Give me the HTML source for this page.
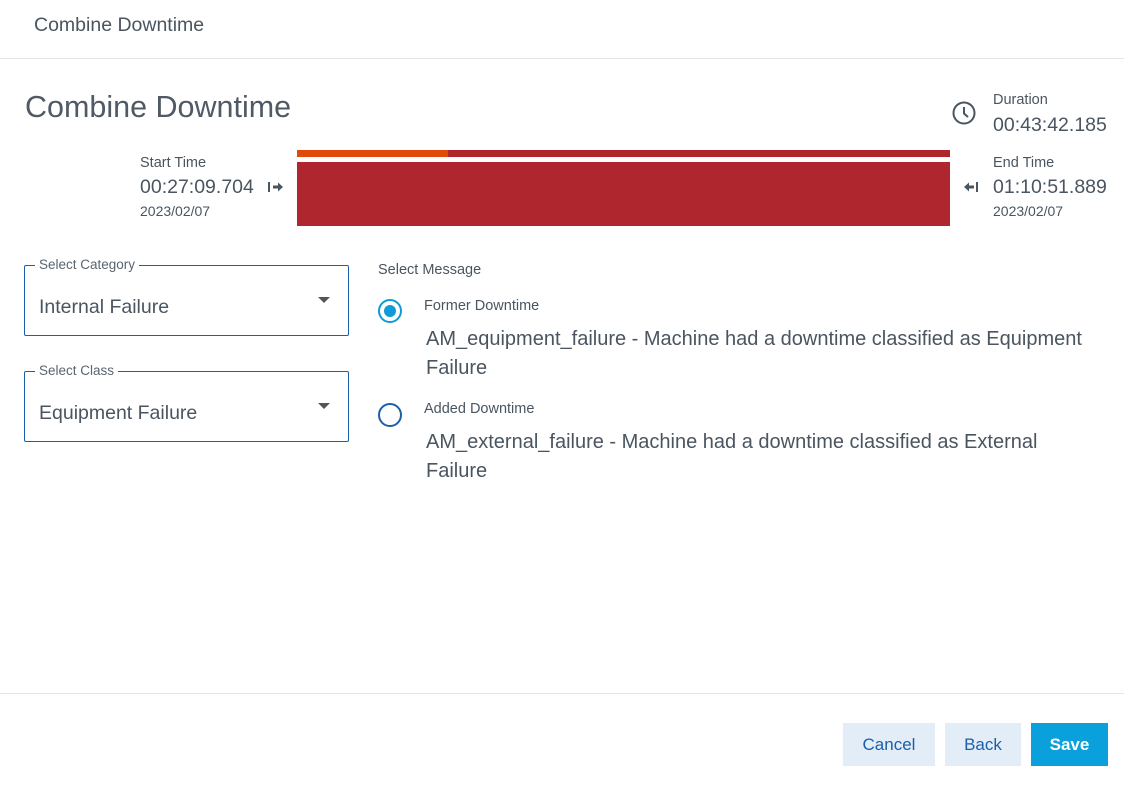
<!DOCTYPE html>
<html><head><style>
*{margin:0;padding:0;box-sizing:border-box}
body{width:1124px;height:790px;background:#fff;font-family:"Liberation Sans",sans-serif;color:#4a5560;position:relative;overflow:hidden}
.a{position:absolute;white-space:nowrap}
.hdr{top:14px;left:34px;font-size:19.5px;color:#4a5560}
.line{position:absolute;left:0;width:1124px;height:1px;background:#e2e5e8}
.fld{position:absolute;left:24px;width:325px;height:71px;border:1px solid #1a5fa8;border-radius:2px}
.fld .lb{position:absolute;top:-9px;left:10px;background:#fff;padding:0 4px;font-size:13.5px;color:#5a6570}
.fld .v{position:absolute;top:30px;left:14px;font-size:19.5px;color:#4a5560}
.fld .car{position:absolute;right:18px;top:31px;width:0;height:0;border-left:6px solid transparent;border-right:6px solid transparent;border-top:6px solid #555}
.btn{position:absolute;top:723px;height:43px;font-size:17px;text-align:center;line-height:43px;color:#1a5fa8;background:#e3edf8}
</style></head><body>
<div class="a hdr">Combine Downtime</div>
<div class="line" style="top:58px"></div>
<div class="a" style="top:90px;left:25px;font-size:30.5px;color:#4f5a66">Combine Downtime</div>

<div class="a" style="top:155px;left:140px;font-size:14.5px">Start Time</div>
<div class="a" style="top:176px;left:140px;font-size:19.5px">00:27:09.704</div>
<div class="a" style="top:203px;left:140px;font-size:14px">2023/02/07</div>
<svg class="a" style="top:180px;left:267px" width="18" height="14"><rect x="1" y="2" width="2" height="10" fill="#4a5560"/><path d="M6 5.5h5V2.5l5 4.5-5 4.5V8.5H6z" fill="#4a5560"/></svg>

<div class="a" style="top:150px;left:297px;width:151px;height:7px;background:#e04a0a"></div>
<div class="a" style="top:150px;left:448px;width:502px;height:7px;background:#b0262f"></div>
<div class="a" style="top:162px;left:297px;width:653px;height:64px;background:#b0262f"></div>

<svg class="a" style="top:100px;left:951px" width="26" height="26"><circle cx="13" cy="13" r="10.5" fill="none" stroke="#4a5560" stroke-width="2"/><path d="M13 7v6.5l4 3.5" fill="none" stroke="#4a5560" stroke-width="2"/></svg>
<div class="a" style="top:92px;left:993px;font-size:14.5px">Duration</div>
<div class="a" style="top:114px;left:993px;font-size:19.5px">00:43:42.185</div>
<div class="a" style="top:155px;left:993px;font-size:14.5px">End Time</div>
<div class="a" style="top:176px;left:993px;font-size:19.5px">01:10:51.889</div>
<div class="a" style="top:203px;left:993px;font-size:14px">2023/02/07</div>
<svg class="a" style="top:180px;left:962px" width="18" height="14"><path d="M12 5.5H7V2.5L2 7l5 4.5V8.5h5z" fill="#4a5560"/><rect x="14" y="2" width="2" height="10" fill="#4a5560"/></svg>

<div class="fld" style="top:265px"><div class="lb">Select Category</div><div class="v">Internal Failure</div><div class="car"></div></div>
<div class="fld" style="top:371px"><div class="lb">Select Class</div><div class="v">Equipment Failure</div><div class="car"></div></div>

<div class="a" style="top:262px;left:378px;font-size:14.5px">Select Message</div>
<svg class="a" style="top:298px;left:377px" width="26" height="26"><circle cx="13" cy="13" r="11" fill="none" stroke="#0e9bd8" stroke-width="2"/><circle cx="13" cy="13" r="6" fill="#0e9bd8"/></svg>
<div class="a" style="top:298px;left:424px;font-size:14.5px">Former Downtime</div>
<div class="a" style="top:325px;left:426px;font-size:20px;line-height:29px">AM_equipment_failure - Machine had a downtime classified as Equipment<br>Failure</div>
<svg class="a" style="top:402px;left:377px" width="26" height="26"><circle cx="13" cy="13" r="11" fill="none" stroke="#1a5fa8" stroke-width="2"/></svg>
<div class="a" style="top:401px;left:424px;font-size:14.5px">Added Downtime</div>
<div class="a" style="top:428px;left:426px;font-size:20px;line-height:29px">AM_external_failure - Machine had a downtime classified as External<br>Failure</div>

<div class="line" style="top:693px"></div>
<div class="btn" style="left:843px;width:92px">Cancel</div>
<div class="btn" style="left:945px;width:76px">Back</div>
<div class="btn" style="left:1031px;width:77px;background:#0aa0db;color:#fff;font-weight:bold">Save</div>
</body></html>
